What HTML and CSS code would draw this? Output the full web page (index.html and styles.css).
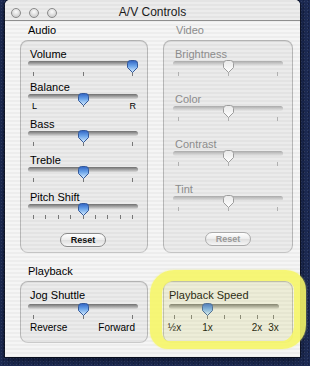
FILE: index.html
```html
<!DOCTYPE html>
<html lang="en">
<head>
  <meta charset="UTF-8">
  <title>A/V Controls</title>
  <link rel="stylesheet" href="styles.css">
</head>
<body>
  <svg class="defs" aria-hidden="true">
    <defs>
      <linearGradient id="gBlue" x1="0" y1="0" x2="0" y2="1">
        <stop offset="0" stop-color="#2f62c2"/>
        <stop offset=".45" stop-color="#6aa4ea"/>
        <stop offset="1" stop-color="#dcf0ff"/>
      </linearGradient>
      <linearGradient id="gGray" x1="0" y1="0" x2="0" y2="1">
        <stop offset="0" stop-color="#e9e9e9"/>
        <stop offset="1" stop-color="#ffffff"/>
      </linearGradient>
      <symbol id="knobBlue" viewBox="0 0 11 13">
        <path d="M0.5 3.5Q0.5 0.5 3.5 0.5H7.5Q10.5 0.5 10.5 3.5V7.5L5.5 12.5L0.5 7.5Z" fill="url(#gBlue)" stroke="#34599a"/>
      </symbol>
      <symbol id="knobGray" viewBox="0 0 11 13">
        <path d="M0.5 3.5Q0.5 0.5 3.5 0.5H7.5Q10.5 0.5 10.5 3.5V7.5L5.5 12.5L0.5 7.5Z" fill="url(#gGray)" stroke="#9c9c9c"/>
      </symbol>
    </defs>
  </svg>

  <div class="window">
    <div class="titlebar">
      <div class="lights"><span></span><span></span><span></span></div>
      <div class="title">A/V Controls</div>
    </div>

    <div class="content">
      <div class="columns">
        <section class="audio">
          <h2 class="section-title">Audio</h2>
          <div class="box">
            <div class="field h33">
              <div class="label">Volume</div>
              <div class="slider"><svg class="knob" style="--v:1"><use href="#knobBlue"/></svg></div>
              <div class="ticks"><i></i><i></i><i></i></div>
            </div>
            <div class="field h37">
              <div class="label">Balance</div>
              <div class="slider"><svg class="knob" style="--v:.5"><use href="#knobBlue"/></svg></div>
              <div class="scale lr"><span>L</span><i></i><span>R</span></div>
            </div>
            <div class="field h36">
              <div class="label">Bass</div>
              <div class="slider"><svg class="knob" style="--v:.5"><use href="#knobBlue"/></svg></div>
              <div class="ticks"><i></i><i></i><i></i></div>
            </div>
            <div class="field h37">
              <div class="label">Treble</div>
              <div class="slider"><svg class="knob" style="--v:.5"><use href="#knobBlue"/></svg></div>
              <div class="ticks"><i></i><i></i><i></i></div>
            </div>
            <div class="field h42">
              <div class="label">Pitch Shift</div>
              <div class="slider"><svg class="knob" style="--v:.5"><use href="#knobBlue"/></svg></div>
              <div class="ticks"><i></i><i></i><i></i><i></i><i></i><i></i><i></i><i></i><i></i></div>
            </div>
            <button class="reset">Reset</button>
          </div>
        </section>

        <section class="video disabled">
          <h2 class="section-title">Video</h2>
          <div class="box">
            <div class="field h45">
              <div class="label">Brightness</div>
              <div class="slider"><svg class="knob" style="--v:.5"><use href="#knobGray"/></svg></div>
              <div class="ticks"><i></i><i></i><i></i></div>
            </div>
            <div class="field h45">
              <div class="label">Color</div>
              <div class="slider"><svg class="knob" style="--v:.5"><use href="#knobGray"/></svg></div>
              <div class="ticks"><i></i><i></i><i></i></div>
            </div>
            <div class="field h45">
              <div class="label">Contrast</div>
              <div class="slider"><svg class="knob" style="--v:.5"><use href="#knobGray"/></svg></div>
              <div class="ticks"><i></i><i></i><i></i></div>
            </div>
            <div class="field h49">
              <div class="label">Tint</div>
              <div class="slider"><svg class="knob" style="--v:.5"><use href="#knobGray"/></svg></div>
              <div class="ticks"><i></i><i></i><i></i></div>
            </div>
            <button class="reset" disabled>Reset</button>
          </div>
        </section>
      </div>

      <h2 class="section-title playback-title">Playback</h2>
      <div class="columns playback">
        <div class="box jog">
          <div class="label">Jog Shuttle</div>
          <div class="slider"><svg class="knob" style="--v:.5"><use href="#knobBlue"/></svg></div>
          <div class="ticks"><i></i><i></i><i></i></div>
          <div class="scale words"><span>Reverse</span><span>Forward</span></div>
        </div>
        <div class="box speed">
          <div class="label">Playback Speed</div>
          <div class="slider"><svg class="knob" style="--v:.3333"><use href="#knobBlue"/></svg></div>
          <div class="ticks"><i></i><i></i><i></i><i></i><i></i><i></i><i></i></div>
          <div class="scale marks">
            <span style="--t:0">½x</span>
            <span style="--t:.3333">1x</span>
            <span style="--t:.8333">2x</span>
            <span style="--t:1">3x</span>
          </div>
        </div>
      </div>
    </div>

    <div class="highlight"></div>
  </div>
</body>
</html>
```

FILE: styles.css
```css
html, body {
  margin: 0;
  padding: 0;
}
body {
  height: 366px;
  overflow: hidden;
  background-color: #1d2b55;
  background-image:
    radial-gradient(rgba(255, 255, 255, 0.10) 0.7px, transparent 1px),
    radial-gradient(rgba(0, 0, 0, 0.25) 0.7px, transparent 1px);
  background-size: 3px 3px, 5px 4px;
  background-position: 0 0, 1px 2px;
  font-family: "Liberation Sans", Arial, sans-serif;
  font-size: 11px;
  color: #000;
}
.defs {
  position: absolute;
  width: 0;
  height: 0;
}

/* window */
.window {
  position: relative;
  margin-left: 5px;
  width: 295px;
  height: 357px;
  border-radius: 5px 5px 0 0;
  background: repeating-linear-gradient(#ededed 0 2px, #f5f5f5 2px 4px);
  box-shadow: 0 0 0 1px rgba(0, 0, 0, 0.45), 0 3px 10px rgba(0, 0, 0, 0.5);
}
.titlebar {
  height: 20px;
  display: grid;
  grid-template-columns: 1fr auto 1fr;
  align-items: start;
  border-bottom: 1px solid #8e8e8e;
  border-radius: 5px 5px 0 0;
  background: repeating-linear-gradient(#e4e4e4 0 2px, #ececec 2px 4px);
}
.lights {
  display: flex;
  gap: 8px;
  padding: 8px 0 0 6px;
}
.lights span {
  width: 10px;
  height: 10px;
  box-sizing: border-box;
  border-radius: 50%;
  border: 1px solid #8a8a8a;
  background: radial-gradient(circle at 50% 35%, #fbfbfb, #d2d2d2 70%, #b9b9b9);
}
.title {
  padding-top: 4px;
  line-height: 17px;
  font-size: 12px;
  color: #1a1a1a;
}

.content {
  padding: 3px 0 0 15px;
}
.columns {
  display: flex;
  gap: 15px;
}
.section-title {
  margin: 0 0 3px 8px;
  font-size: 11px;
  font-weight: normal;
  line-height: 13px;
}
.video .section-title {
  margin-left: 13px;
}
.playback-title {
  margin-top: 12px;
}

/* group boxes */
.box {
  box-sizing: border-box;
  border: 1px solid rgba(0, 0, 0, 0.22);
  border-bottom-color: rgba(0, 0, 0, 0.14);
  border-radius: 8px;
  background: rgba(0, 0, 0, 0.04);
  box-shadow: inset 0 1px 1px rgba(0, 0, 0, 0.06);
  padding-top: 7px;
}
.audio .box { width: 128px; height: 213px; padding-left: 7px; }
.video .box { width: 130px; height: 213px; padding-left: 9px; }
.jog { width: 128px; height: 62px; padding-left: 7px; }
.speed { width: 130px; height: 62px; padding-left: 5px; }

.field.h33 { height: 33px; }
.field.h36 { height: 36px; }
.field.h37 { height: 37px; }
.field.h42 { height: 42px; }
.field.h45 { height: 45px; }
.field.h49 { height: 49px; }

.label {
  line-height: 13px;
  margin-left: 2px;
}
.speed .label {
  margin-left: 0;
}

/* slider */
.slider {
  position: relative;
  width: 110px;
  height: 5px;
  border-radius: 3px;
  background: linear-gradient(#6f6f6f, #9d9d9d 45%, #d9d9d9);
}
.playback .slider {
  margin-top: 2px;
}
.knob {
  position: absolute;
  top: -1px;
  left: calc(var(--v) * (100% - 11px));
  width: 11px;
  height: 13px;
}
.ticks {
  display: flex;
  justify-content: space-between;
  box-sizing: border-box;
  width: 110px;
  height: 4px;
  padding: 0 5px;
  margin-top: 6px;
}
.ticks i,
.scale i {
  width: 1px;
  height: 4px;
  background: #777;
}

.scale {
  display: flex;
  justify-content: space-between;
  box-sizing: border-box;
  width: 110px;
}
.scale.lr {
  margin-top: 3px;
  padding: 0 2px 0 4px;
  font-size: 9px;
  line-height: 9px;
}
.scale.lr i {
  margin-top: 1px;
}
.scale.words {
  margin-top: 3px;
  padding: 0 3px 0 2px;
  font-size: 10px;
  line-height: 12px;
}
.scale.marks {
  position: relative;
  height: 12px;
  margin-top: 3px;
  font-size: 10px;
  line-height: 12px;
}
.scale.marks span {
  position: absolute;
  top: 0;
  left: calc(5.5px + var(--t) * (100% - 11px));
  transform: translateX(-50%);
}

/* buttons */
.reset {
  display: block;
  width: 46px;
  height: 14px;
  margin-left: 32px;
  padding: 0;
  border: 1px solid #8a8a8a;
  border-radius: 7px;
  background: linear-gradient(#ffffff, #ececec 50%, #dedede 50%, #f6f6f6);
  font-family: "Liberation Sans", Arial, sans-serif;
  font-size: 9px;
  font-weight: bold;
  line-height: 12px;
  color: #111;
}

/* disabled video group */
.disabled .section-title,
.disabled .label {
  color: #8c8c8c;
}
.disabled .slider {
  background: linear-gradient(#a9a9a9, #c6c6c6 45%, #e6e6e6);
}
.disabled .ticks i {
  background: #b0b0b0;
}
.disabled .reset {
  color: #999;
  border-color: #ababab;
}

/* hand-drawn marker ring */
.highlight {
  position: absolute;
  left: 145px;
  top: 270px;
  width: 156px;
  height: 79px;
  box-sizing: border-box;
  border-style: solid;
  border-width: 11px 12px 8px 12px;
  border-color: rgba(246, 246, 104, 0.88);
  border-radius: 24px 20px 24px 18px;
  background: rgba(246, 246, 120, 0.16);
  box-shadow: 0 0 2px rgba(246, 246, 104, 0.7);
}
```
